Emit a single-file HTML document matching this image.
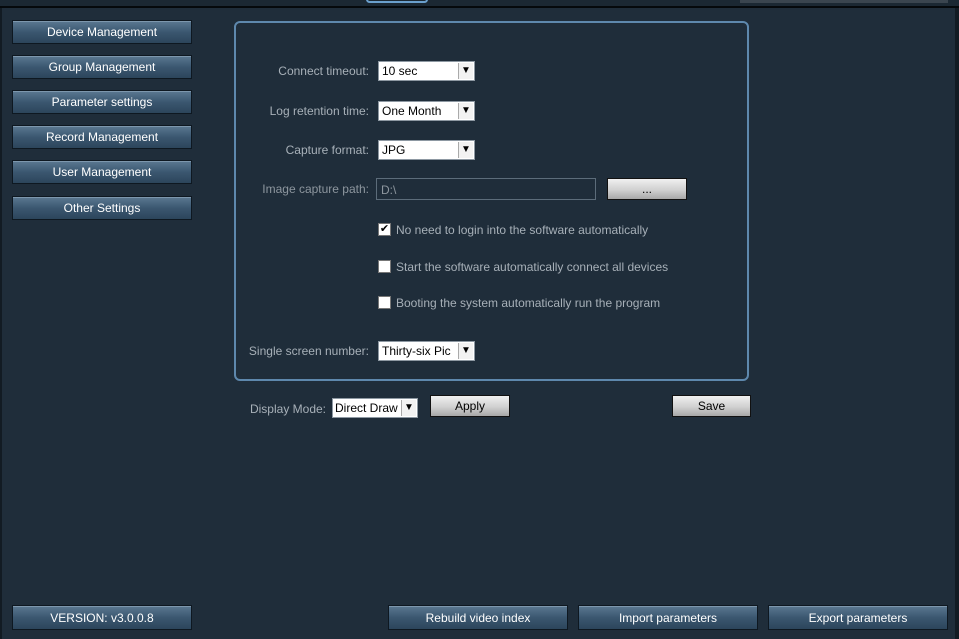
<!DOCTYPE html>
<html><head><meta charset="utf-8"><style>
*{margin:0;padding:0;box-sizing:border-box}
body{width:959px;height:639px;background:#1f2d3a;font-family:"Liberation Sans",sans-serif;font-size:12px;color:#aab4bd;position:relative;overflow:hidden}
.a{position:absolute}
.nav{position:absolute;left:12px;width:180px;height:24px;border:1px solid #0e1821;background:linear-gradient(#5b7891,#3b5770 50%,#2c455b);color:#fff;text-align:center;line-height:23px;font-size:12px;box-shadow:inset 0 1px 0 #7d97ad}
.btm{position:absolute;top:605px;height:25px;border:1px solid #0e1821;background:linear-gradient(#5b7891,#3b5770 50%,#2c455b);color:#fff;text-align:center;line-height:25px;font-size:12px;box-shadow:inset 0 1px 0 #7d97ad}
.lbl{position:absolute;text-align:right;color:#a7b0b8}
.sel{position:absolute;height:20px;background:#fff;color:#000;border:1px solid #8d98a2;line-height:19px;padding-left:3px;white-space:nowrap;overflow:hidden}
.sel i{position:absolute;right:1px;top:1px;width:15px;height:16px;background:#f2f2f2;border-left:1px solid #aaa;font-style:normal;font-size:10px;text-align:center;line-height:16px;color:#000}
.gb{position:absolute;height:22px;border:1px solid #111;background:linear-gradient(#f0f0f0,#d0d0d0 55%,#a8a8a8);color:#000;text-align:center;line-height:21px}
.cb{position:absolute;width:13px;height:13px;background:#fff;border:1px solid #777;left:378px;font-size:11px;line-height:11px;text-align:center;color:#000}
.ct{position:absolute;left:396px;color:#a7b0b8}
</style></head><body>
<div class="a" style="left:0;top:0;width:959px;height:7px;background:#1b2833"></div>
<div class="a" style="left:0;top:6px;width:959px;height:2px;background:#05090c"></div>
<div class="a" style="left:366px;top:-4px;width:62px;height:7px;border:2px solid #6a9fcc;border-radius:4px"></div>
<div class="a" style="left:740px;top:0;width:208px;height:3px;background:#3a454f"></div>
<div class="a" style="left:955px;top:8px;width:4px;height:631px;background:#121b23"></div>
<div class="a" style="left:0;top:8px;width:2px;height:631px;background:#121b23"></div>

<div class="nav" style="top:20px">Device Management</div>
<div class="nav" style="top:55px">Group Management</div>
<div class="nav" style="top:90px">Parameter settings</div>
<div class="nav" style="top:125px">Record Management</div>
<div class="nav" style="top:160px">User Management</div>
<div class="nav" style="top:196px">Other Settings</div>

<div class="a" style="left:234px;top:21px;width:515px;height:360px;border:2px solid #5e88ad;border-radius:6px"></div>

<div class="lbl" style="left:230px;width:139px;top:64px">Connect timeout:</div>
<div class="sel" style="left:378px;top:61px;width:97px">10 sec<i>▼</i></div>
<div class="lbl" style="left:230px;width:139px;top:104px">Log retention time:</div>
<div class="sel" style="left:378px;top:101px;width:97px">One Month<i>▼</i></div>
<div class="lbl" style="left:230px;width:139px;top:143px">Capture format:</div>
<div class="sel" style="left:378px;top:140px;width:97px">JPG<i>▼</i></div>
<div class="lbl" style="left:230px;width:139px;top:182px;color:#8d969e">Image capture path:</div>
<div class="a" style="left:376px;top:178px;width:220px;height:22px;border:1px solid #5c6c7a;color:#8d969e;padding:4px 0 0 4px">D:\</div>
<div class="gb" style="left:607px;top:178px;width:80px">...</div>

<div class="cb" style="top:223px">✔</div><div class="ct" style="top:223px">No need to login into the software automatically</div>
<div class="cb" style="top:260px"></div><div class="ct" style="top:260px">Start the software automatically connect all devices</div>
<div class="cb" style="top:296px"></div><div class="ct" style="top:296px">Booting the system automatically run the program</div>

<div class="lbl" style="left:230px;width:139px;top:344px">Single screen number:</div>
<div class="sel" style="left:378px;top:341px;width:97px">Thirty-six Pic<i>▼</i></div>

<div class="lbl" style="left:230px;width:96px;top:402px">Display Mode:</div>
<div class="sel" style="left:332px;top:398px;width:86px;padding-left:2px">Direct Draw<i>▼</i></div>
<div class="gb" style="left:430px;top:395px;width:80px">Apply</div>
<div class="gb" style="left:672px;top:395px;width:79px">Save</div>

<div class="btm" style="left:12px;width:180px">VERSION: v3.0.0.8</div>
<div class="btm" style="left:388px;width:180px">Rebuild video index</div>
<div class="btm" style="left:578px;width:180px">Import parameters</div>
<div class="btm" style="left:768px;width:180px">Export parameters</div>
</body></html>
